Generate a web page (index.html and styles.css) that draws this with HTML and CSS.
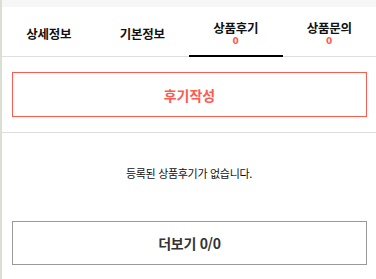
FILE: index.html
```html
<!DOCTYPE html>
<html lang="ko">
<head>
<meta charset="utf-8">
<link rel="stylesheet" href="styles.css">
</head>
<body>
<div class="strip"></div>
<div class="main">
  <div class="topband"></div>
  <nav class="tabs">
    <div class="tab"><span class="label">상세정보</span></div>
    <div class="tab"><span class="label">기본정보</span></div>
    <div class="tab active"><span class="label">상품후기</span><span class="count">0</span></div>
    <div class="tab"><span class="label">상품문의</span><span class="count">0</span></div>
  </nav>
  <section class="write-area">
    <div class="btn-write">후기작성</div>
  </section>
  <p class="empty">등록된 상품후기가 없습니다.</p>
  <section class="more-area">
    <div class="btn-more">더보기 0/0</div>
  </section>
</div>
</body>
</html>
```
FILE: styles.css
```css
html, body {
  margin: 0;
  padding: 0;
  background: #fff;
}
body {
  display: flex;
  width: 376px;
  height: 279px;
  overflow: hidden;
  font-family: "Noto Sans CJK KR", "Noto Sans", sans-serif;
}
.strip {
  width: 2px;
  flex: none;
  background: #d9dfd3;
}
.main {
  flex: 1;
  display: flex;
  flex-direction: column;
}
.topband {
  height: 7px;
  background: #f6f6f6;
}
.tabs {
  display: grid;
  grid-template-columns: repeat(4, 1fr);
  height: 49px;
  border-bottom: 1px solid #dedede;
}
.tab {
  display: flex;
  flex-direction: column;
  align-items: center;
  justify-content: center;
  padding-top: 4px;
  position: relative;
  color: #111;
}
.tab .label {
  font-size: 12.5px;
  font-weight: 700;
  line-height: 14px;
  letter-spacing: -0.3px;
}
.tab .count {
  margin-top: 1px;
  font-family: "DejaVu Sans", sans-serif;
  font-size: 9px;
  font-weight: 700;
  line-height: 11px;
  color: #ff5a4e;
}
.tab.active::after {
  content: "";
  position: absolute;
  left: 0;
  right: 0;
  bottom: -1px;
  height: 2px;
  background: #000;
}
.write-area {
  padding: 15px 9px 15px 10px;
  border-bottom: 1px solid #dedede;
}
.btn-write {
  height: 43px;
  border: 1px solid #ff5a4e;
  display: flex;
  align-items: center;
  justify-content: center;
  color: #ff5a4e;
  font-size: 14px;
  font-weight: 700;
}
.empty {
  margin: 0;
  height: 88px;
  padding-top: 32px;
  box-sizing: border-box;
  text-align: center;
  font-size: 11px;
  letter-spacing: -0.3px;
  color: #111;
  line-height: 16px;
}
.more-area {
  padding: 0 9px 0 10px;
}
.btn-more {
  height: 42px;
  border: 1px solid #999;
  display: flex;
  align-items: center;
  justify-content: center;
  color: #333;
  font-size: 14px;
  font-weight: 700;
  letter-spacing: -0.3px;
}
```
